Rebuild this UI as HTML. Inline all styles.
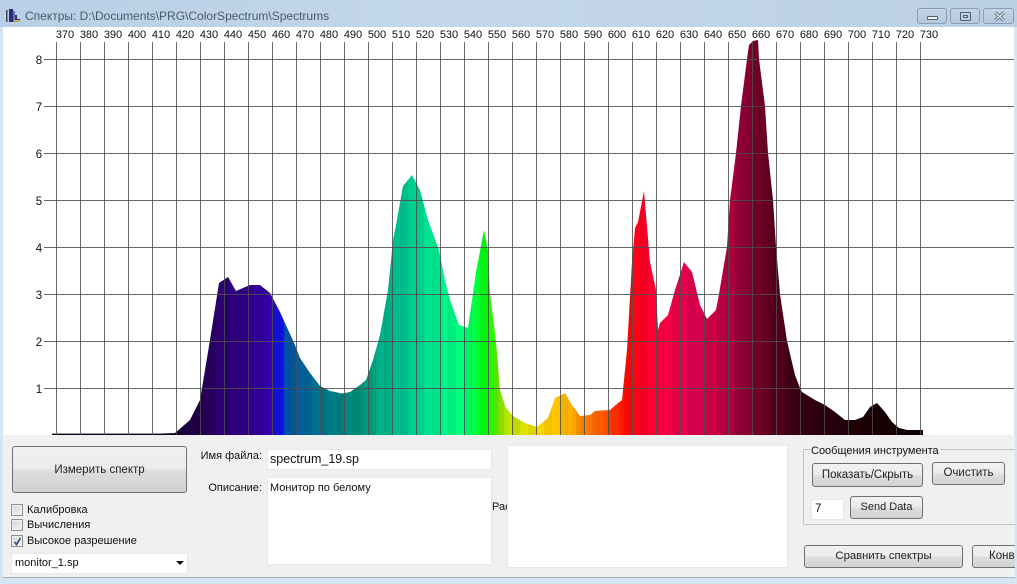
<!DOCTYPE html>
<html><head><meta charset="utf-8"><style>
html,body{margin:0;padding:0}
body{width:1017px;height:584px;overflow:hidden;position:relative;background:#d6e4f3;font-family:"Liberation Sans",sans-serif;font-size:11px;color:#111}
div{position:absolute;box-sizing:border-box;white-space:nowrap}
.tb{background:linear-gradient(#c3d4e6,#b4c9df);border:1px solid #8a9db3;border-radius:3px;height:16px;top:8px}
.btn{border:1px solid #707070;border-radius:3px;background:linear-gradient(#f2f2f2 0,#ebebeb 48%,#dedede 52%,#d2d2d2 100%);text-align:center;color:#222;font-size:11.5px}
.inp{background:#fff;border:1px solid #e8e8e8}
.cb{width:12px;height:12px;background:linear-gradient(135deg,#d4d4d4,#f6f6f6);border:1px solid #8e8f8f;box-shadow:inset 0 0 0 1px #f0f0f0}
.l{line-height:14px}
</style></head><body>
<div style="left:0;top:0;width:1017px;height:27px;background:linear-gradient(90deg,#b8cfe6 0,#c4d7ea 45%,#bcd0e4 100%)"></div>
<svg style="position:absolute;left:5px;top:8px" width="16" height="16" viewBox="0 0 16 16"><rect x="1" y="2" width="1.5" height="12" fill="#445"/><rect x="4" y="1" width="4" height="13" fill="#23307a"/><rect x="8" y="3" width="2" height="11" fill="#6a70b8"/><path d="M10 7h2v4h3v3h-5z" fill="#30405a"/><rect x="9" y="12" width="6" height="2" fill="#c8a860"/></svg>
<div class="l" style="left:25px;top:9px;color:#4a5a6a;font-size:12px">Спектры: D:\Documents\PRG\ColorSpectrum\Spectrums</div>
<div class="tb" style="left:917px;width:30px"><div style="left:9px;top:7px;width:11px;height:4px;border:1px solid #54606e;background:#f0f4f8;border-radius:1px"></div></div>
<div class="tb" style="left:950px;width:30px"><div style="left:9px;top:3px;width:11px;height:9px;border:1px solid #54606e;border-radius:1px"><div style="left:2px;top:2px;width:5px;height:3px;border:1px solid #54606e"></div></div></div>
<div class="tb" style="left:983px;width:31px"><svg style="position:absolute;left:9px;top:2px" width="13" height="11"><path d="M2 1.5l9 8M11 1.5l-9 8" stroke="#54606e" stroke-width="3"/><path d="M2 1.5l9 8M11 1.5l-9 8" stroke="#eef2f6" stroke-width="1.2"/></svg></div>
<div style="left:3px;top:27px;width:1011px;height:408px;background:#fff"></div>
<svg style="position:absolute;left:0;top:0" width="1017" height="584">
<defs>
<linearGradient id="final" gradientUnits="userSpaceOnUse" x1="0" y1="0" x2="1000" y2="0">
<stop offset="0.16" stop-color="#0a0018"/>
<stop offset="0.18" stop-color="#1a0038"/>
<stop offset="0.2" stop-color="#24004f"/>
<stop offset="0.22" stop-color="#2c0070"/>
<stop offset="0.25" stop-color="#300090"/>
<stop offset="0.27" stop-color="#3500a8"/>
<stop offset="0.273" stop-color="#1a10d8"/>
<stop offset="0.283" stop-color="#1010e0"/>
<stop offset="0.285" stop-color="#0050a8"/>
<stop offset="0.31" stop-color="#006a94"/>
<stop offset="0.33" stop-color="#007c88"/>
<stop offset="0.36" stop-color="#009078"/>
<stop offset="0.38" stop-color="#00b088"/>
<stop offset="0.4" stop-color="#00c090"/>
<stop offset="0.42" stop-color="#00d890"/>
<stop offset="0.44" stop-color="#00f090"/>
<stop offset="0.46" stop-color="#00ff80"/>
<stop offset="0.47" stop-color="#00ff60"/>
<stop offset="0.48" stop-color="#00ff20"/>
<stop offset="0.488" stop-color="#10ff00"/>
<stop offset="0.495" stop-color="#40f000"/>
<stop offset="0.5" stop-color="#90e800"/>
<stop offset="0.51" stop-color="#c0e400"/>
<stop offset="0.53" stop-color="#e8e000"/>
<stop offset="0.545" stop-color="#ffd000"/>
<stop offset="0.56" stop-color="#ffc000"/>
<stop offset="0.57" stop-color="#ffb000"/>
<stop offset="0.585" stop-color="#ff8000"/>
<stop offset="0.6" stop-color="#ff6000"/>
<stop offset="0.615" stop-color="#ff3000"/>
<stop offset="0.627" stop-color="#ff0800"/>
<stop offset="0.64" stop-color="#ff0020"/>
<stop offset="0.66" stop-color="#ff0040"/>
<stop offset="0.69" stop-color="#e00050"/>
<stop offset="0.71" stop-color="#d00048"/>
<stop offset="0.73" stop-color="#b00040"/>
<stop offset="0.75" stop-color="#800030"/>
<stop offset="0.77" stop-color="#600020"/>
<stop offset="0.79" stop-color="#400018"/>
<stop offset="0.81" stop-color="#300010"/>
<stop offset="0.85" stop-color="#200008"/>
<stop offset="0.92" stop-color="#0e0000"/>
</linearGradient>
<pattern id="st" patternUnits="userSpaceOnUse" x="0" y="0" width="16" height="10"><rect x="0" y="0" width="8" height="10" fill="#000" fill-opacity=".05"/></pattern>
</defs>
<path id="sp" fill="url(#final)" d="M52 435L52 433.6L160 433.6L175 433L190 420L200 400L210 340L219 283L228 277L236 291L250 285L260 285L270 293L280 312L295 345L300 358L310 373L320 386L330 391L342 393.5L350 392L360 385L366 380L373 360L380 335L388 290L393 240L396 225L403 186L412 175L420 190L428 220L439 250L445 280L450 300L459 325L468 328L472 300L476 272L484 230L488 250L490 293L496 341L500 390L506 408L513 416L525 423L537 427L548 418L555 398L565 393L572 405L580 416L590 415L595 411L610 410L618 403L622 400L627 350L632 262L635 228L638 222L644 191L650 262L656 290L658 330L660 323L668 315L675 290L684 262L692 272L700 305L707 319L716 310L719 294L727 247L730 200L736 153L741 106L747 59L749 45L753 41L758 40L759 59L765 106L768 153L773 200L776 247L780 294L787 341L795 375L800 388L802 392L815 400L825 405L835 412L845 420L855 420L863 417L870 407L877 403L885 412L892 422L899 428L907 430L923 430L923 435Z"/>
<path fill="url(#st)" d="M160 435L175 433L190 420L200 400L210 340L219 283L228 277L236 291L250 285L260 285L270 293L280 312L295 345L300 358L310 373L320 386L330 391L342 393.5L350 392L360 385L366 380L373 360L380 335L388 290L393 240L396 225L403 186L412 175L420 190L428 220L439 250L445 280L450 300L459 325L468 328L472 300L476 272L484 230L488 250L490 293L496 341L500 390L506 408L513 416L525 423L537 427L548 418L555 398L565 393L572 405L580 416L590 415L595 411L610 410L618 403L622 400L627 350L632 262L635 228L638 222L644 191L650 262L656 290L658 330L660 323L668 315L675 290L684 262L692 272L700 305L707 319L716 310L719 294L727 247L730 200L736 153L741 106L747 59L749 45L753 41L758 40L759 59L765 106L768 153L773 200L776 247L780 294L787 341L795 375L800 388L802 392L815 400L825 405L835 412L845 420L855 420L863 417L870 407L877 403L885 412L892 422L899 428L907 430L923 430L923 435Z"/>
<g stroke="#4c4c4c" stroke-opacity=".85" stroke-width="1" shape-rendering="crispEdges">
<path d="M44 59.5H1014M44 106.5H1014M44 153.5H1014M44 200.5H1014M44 247.5H1014M44 294.5H1014M44 341.5H1014M44 388.5H1014"/>
<path d="M56.5 42V435M80.5 42V435M104.5 42V435M128.5 42V435M152.5 42V435M176.5 42V435M200.5 42V435M224.5 42V435M248.5 42V435M272.5 42V435M296.5 42V435M320.5 42V435M344.5 42V435M368.5 42V435M392.5 42V435M416.5 42V435M440.5 42V435M464.5 42V435M488.5 42V435M512.5 42V435M536.5 42V435M560.5 42V435M584.5 42V435M608.5 42V435M632.5 42V435M656.5 42V435M680.5 42V435M704.5 42V435M728.5 42V435M752.5 42V435M776.5 42V435M800.5 42V435M824.5 42V435M848.5 42V435M872.5 42V435M896.5 42V435M920.5 42V435"/>
</g>
<g font-family="Liberation Sans,sans-serif" font-size="11" fill="#111" text-anchor="middle">
<text x="65" y="38">370</text><text x="89" y="38">380</text><text x="113" y="38">390</text><text x="137" y="38">400</text><text x="161" y="38">410</text><text x="185" y="38">420</text><text x="209" y="38">430</text><text x="233" y="38">440</text><text x="257" y="38">450</text><text x="281" y="38">460</text><text x="305" y="38">470</text><text x="329" y="38">480</text><text x="353" y="38">490</text><text x="377" y="38">500</text><text x="401" y="38">510</text><text x="425" y="38">520</text><text x="449" y="38">530</text><text x="473" y="38">540</text><text x="497" y="38">550</text><text x="521" y="38">560</text><text x="545" y="38">570</text><text x="569" y="38">580</text><text x="593" y="38">590</text><text x="617" y="38">600</text><text x="641" y="38">610</text><text x="665" y="38">620</text><text x="689" y="38">630</text><text x="713" y="38">640</text><text x="737" y="38">650</text><text x="761" y="38">660</text><text x="785" y="38">670</text><text x="809" y="38">680</text><text x="833" y="38">690</text><text x="857" y="38">700</text><text x="881" y="38">710</text><text x="905" y="38">720</text><text x="929" y="38">730</text>
</g>
<g font-family="Liberation Sans,sans-serif" font-size="11.5" fill="#111" text-anchor="middle">
<text x="39" y="64">8</text><text x="39" y="111">7</text><text x="39" y="158">6</text><text x="39" y="205">5</text><text x="39" y="252">4</text><text x="39" y="299">3</text><text x="39" y="346">2</text><text x="39" y="393">1</text>
</g>
</svg>
<div style="left:3px;top:435px;width:1012px;height:143px;background:#f0f0f0;border-bottom:1px solid #a8b0b8"></div>
<div style="left:0;top:27px;width:3px;height:557px;background:#d6e4f3"></div>
<div style="left:1015px;top:27px;width:2px;height:557px;background:#d6e4f3"></div>
<div class="btn" style="left:12px;top:446px;width:175px;height:47px;line-height:46px">Измерить спектр</div>
<div class="cb" style="left:11px;top:504px"></div><div class="l" style="left:27px;top:503px">Калибровка</div>
<div class="cb" style="left:11px;top:519px"></div><div class="l" style="left:27px;top:518px">Вычисления</div>
<div class="cb" style="left:11px;top:535px"><svg style="position:absolute;left:1px;top:1px" width="9" height="9"><path d="M1.5 5l2 2.5L7.5 1" fill="none" stroke="#3a4f8c" stroke-width="1.7"/></svg></div><div class="l" style="left:27px;top:534px">Высокое разрешение</div>
<div class="inp" style="left:11px;top:553px;width:177px;height:21px;line-height:19px;padding-left:3px;font-size:11px">monitor_1.sp<svg style="position:absolute;left:164px;top:7px" width="9" height="5"><path d="M0 0h8L4 4z" fill="#111"/></svg></div>
<div class="l" style="right:755px;top:449px">Имя файла:</div>
<div class="l" style="right:755px;top:481px">Описание:</div>
<div class="inp" style="left:267px;top:449px;width:225px;height:21px;line-height:19px;padding-left:2px;font-size:12.5px">spectrum_19.sp</div>
<div class="inp" style="left:267px;top:477px;width:225px;height:88px;padding:3px 0 0 2px;line-height:14px;font-size:11px">Монитор по белому</div>
<div class="l" style="left:492px;top:500px;width:15px;overflow:hidden">Рас</div>
<div class="inp" style="left:507px;top:445px;width:281px;height:123px"></div>
<div style="left:803px;top:449px;width:212px;height:76px;border:1px solid #c4c4c4;border-right:0"></div>
<div class="l" style="left:811px;top:444px;background:#f0f0f0;padding-right:1px;font-size:11px">Сообщения инструмента</div>
<div class="btn" style="left:812px;top:463px;width:111px;height:24px;line-height:22px">Показать/Скрыть</div>
<div class="btn" style="left:932px;top:462px;width:73px;height:23px;line-height:21px">Очистить</div>
<div class="inp" style="left:811px;top:499px;width:33px;height:21px;line-height:18px;padding-left:3px;font-size:11.5px">7</div>
<div class="btn" style="left:850px;top:496px;width:73px;height:23px;line-height:21px;font-size:11px">Send Data</div>
<div class="btn" style="left:804px;top:545px;width:159px;height:23px;line-height:21px;font-size:11.3px">Сравнить спектры</div>
<div style="left:972px;top:545px;width:43px;height:23px;overflow:hidden"><div class="btn" style="left:0;top:0;width:90px;height:23px;line-height:21px">Конвертер</div></div>
</body></html>
